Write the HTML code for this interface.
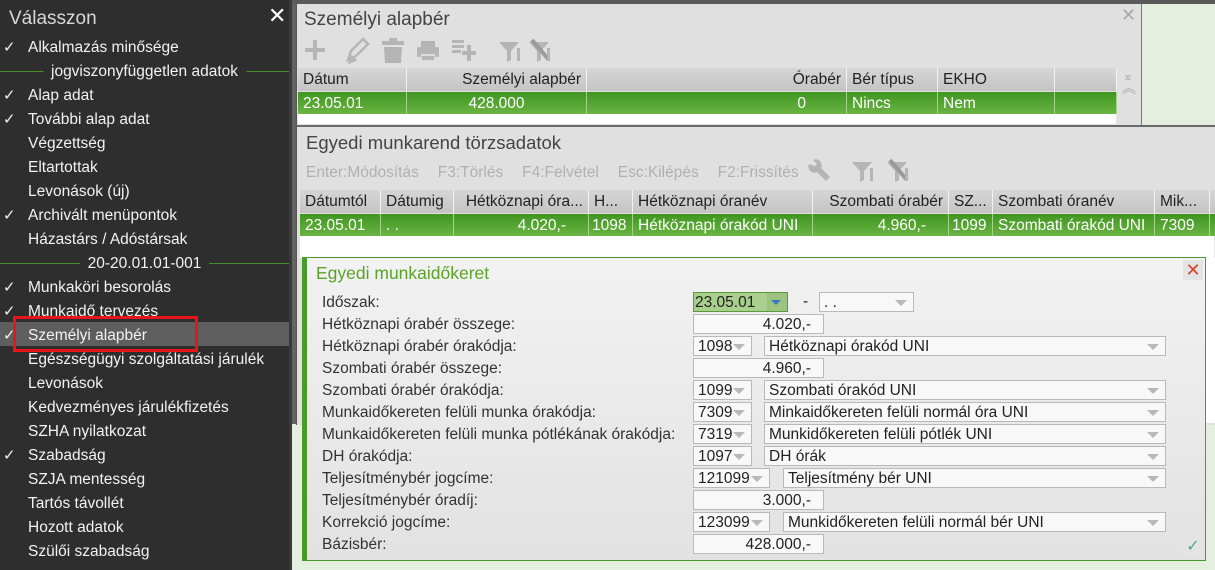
<!DOCTYPE html>
<html><head><meta charset="utf-8"><style>
*{margin:0;padding:0;box-sizing:border-box}
body{width:1215px;height:570px;overflow:hidden;background:#e4efe0;font-family:"Liberation Sans",sans-serif;font-size:15.5px;color:#222;position:relative}
.a{position:absolute;white-space:nowrap}
#side{left:0;top:0;width:289px;height:570px;background:#2e2e2e;color:#f2f2f2}
.it{position:absolute;left:28px;font-size:15.5px;line-height:24px;margin-top:2px}
.ck{position:absolute;left:3px;font-size:15px;line-height:24px;margin-top:2px}
.sep{position:absolute;left:0;width:289px;height:24px;margin-top:2px}
.sep:before{content:"";position:absolute;left:0;right:0;top:11px;border-top:1px solid #4a8f2a}
.sep span{position:absolute;left:50%;transform:translateX(-50%);background:#2e2e2e;padding:0 8px;line-height:24px}
.pan{background:#e0e0e0}
.h{position:absolute;height:23px;line-height:24px;background:linear-gradient(#d6d6d6,#c4c4c4);border-right:1px solid #f2f2f2;padding:0 5px;color:#222;overflow:hidden}
.g{position:absolute;height:22px;line-height:23px;background:linear-gradient(#3f9520,#6ab443);border-right:1px solid #a6d48a;padding:0 5px;color:#fff;overflow:hidden}
.w{position:absolute;background:#fff;border-right:1px solid #e4e4e4}
.r{text-align:right}
.lab{position:absolute;left:322px;font-size:15.5px;color:#333;line-height:22px;margin-top:1px}
.box{position:absolute;height:20px;background:#f8f8f8;border:1px solid #b9b9b9;line-height:19px;padding:0 4px;font-size:15.5px;color:#222;overflow:hidden}
.dd:after{content:"";position:absolute;right:6px;top:7px;border-left:6px solid transparent;border-right:6px solid transparent;border-top:6px solid #b8b8b8}
</style></head><body>
<div class="a" style="left:0;top:0;width:1215px;height:4px;background:#5a5a5a"></div>
<div id="side" class="a">
<div class="a" style="left:9px;top:8px;font-size:19px;color:#d8d8d8">Válasszon</div>
<div class="a" style="left:268px;top:3px;font-size:22px;color:#fff">✕</div>
<div class="ck" style="top:34px">✓</div><div class="it" style="top:34px">Alkalmazás minősége</div>
<div class="sep" style="top:58px"><span>jogviszonyfüggetlen adatok</span></div>
<div class="ck" style="top:82px">✓</div><div class="it" style="top:82px">Alap adat</div>
<div class="ck" style="top:106px">✓</div><div class="it" style="top:106px">További alap adat</div>
<div class="it" style="top:130px">Végzettség</div>
<div class="it" style="top:154px">Eltartottak</div>
<div class="it" style="top:178px">Levonások (új)</div>
<div class="ck" style="top:202px">✓</div><div class="it" style="top:202px">Archivált menüpontok</div>
<div class="it" style="top:226px">Házastárs / Adóstársak</div>
<div class="sep" style="top:250px"><span>20-20.01.01-001</span></div>
<div class="ck" style="top:274px">✓</div><div class="it" style="top:274px">Munkaköri besorolás</div>
<div class="ck" style="top:298px">✓</div><div class="it" style="top:298px">Munkaidő tervezés</div>
<div class="a" style="left:0;top:322px;width:289px;height:24px;background:#5e5e5e"></div>
<div class="ck" style="top:322px">✓</div><div class="it" style="top:322px">Személyi alapbér</div>
<div class="a" style="left:13px;top:316px;width:185px;height:36px;border:3px solid #e8141a"></div>
<div class="it" style="top:346px">Egészségügyi szolgáltatási járulék</div>
<div class="it" style="top:370px">Levonások</div>
<div class="it" style="top:394px">Kedvezményes járulékfizetés</div>
<div class="it" style="top:418px">SZHA nyilatkozat</div>
<div class="ck" style="top:442px">✓</div><div class="it" style="top:442px">Szabadság</div>
<div class="it" style="top:466px">SZJA mentesség</div>
<div class="it" style="top:490px">Tartós távollét</div>
<div class="it" style="top:514px">Hozott adatok</div>
<div class="it" style="top:538px">Szülői szabadság</div>
</div>
<div class="a" style="left:289px;top:0;width:3px;height:570px;background:#3a3a3a"></div>
<div class="a" style="left:292px;top:4px;width:5px;height:420px;background:#636363"></div>

<!-- top panel -->
<div class="a pan" style="left:296px;top:4px;width:846px;height:121px;border-left:1px solid #555;border-right:1px solid #777"></div>
<div class="a" style="left:304px;top:9px;font-size:19px;color:#444">Személyi alapbér</div>
<div class="a" style="left:1121px;top:5px;font-size:18px;color:#aaa">✕</div>
<svg class="a" style="left:300px;top:36px" width="260" height="30" viewBox="0 0 260 30" fill="#b5b5b5">
<rect x="5" y="12" width="20" height="4"/><rect x="13" y="4" width="4" height="20"/>
<path d="M48 24 l3-9 12-12 5 5-12 12z M50 26l2-5 3 3z" fill="none" stroke="#b5b5b5" stroke-width="2.5"/>
<rect x="82" y="5" width="22" height="4"/><rect x="89" y="2" width="8" height="4"/><path d="M84 11h18l-1 16h-16z"/>
<rect x="121" y="5" width="14" height="6"/><rect x="117" y="11" width="22" height="10" rx="2"/><rect x="121" y="18" width="14" height="7" fill="#ddd"/><rect x="122" y="20" width="12" height="4"/>
<rect x="152" y="4" width="12" height="3"/><rect x="152" y="9" width="12" height="3"/><rect x="152" y="14" width="9" height="3"/><rect x="162" y="15" width="14" height="4"/><rect x="167" y="9" width="4" height="16"/>
<path d="M199 6h20l-8 9v9l-4 2v-11z"/><rect x="217" y="12" width="3" height="13"/>
<path d="M229 6h20l-8 9v9l-4 2v-11z"/><path d="M232 4l17 20" stroke="#9a9a9a" stroke-width="4"/><rect x="247" y="12" width="3" height="13"/>
</svg>
<div class="h" style="left:298px;top:68px;width:109px">Dátum</div>
<div class="h r" style="left:407px;top:68px;width:180px">Személyi alapbér</div>
<div class="h r" style="left:587px;top:68px;width:260px">Órabér</div>
<div class="h" style="left:847px;top:68px;width:91px">Bér típus</div>
<div class="h" style="left:938px;top:68px;width:117px">EKHO</div>
<div class="h" style="left:1055px;top:68px;width:62px"></div>
<div class="g" style="left:298px;top:92px;width:109px">23.05.01</div>
<div class="g" style="left:407px;top:92px;width:180px;text-align:center">428.000</div>
<div class="g r" style="left:587px;top:92px;width:260px;padding-right:40px">0</div>
<div class="g" style="left:847px;top:92px;width:91px">Nincs</div>
<div class="g" style="left:938px;top:92px;width:117px">Nem</div>
<div class="g" style="left:1055px;top:92px;width:62px"></div>
<div class="w" style="left:298px;top:114px;width:819px;height:10px"></div>
<div class="a" style="left:1122px;top:70px;font-size:14px;color:#aaa;line-height:12px">⌅<br>︽</div>

<!-- second panel -->
<div class="a pan" style="left:296px;top:125px;width:919px;height:300px;border-top:2px solid #6a6a6a;border-left:1px solid #555"></div>
<div class="a" style="left:306px;top:132px;font-size:18.5px;color:#444">Egyedi munkarend törzsadatok</div>
<div class="a" style="left:306px;top:164px;font-size:15.5px;color:#b0b0b0;word-spacing:2px">Enter:Módosítás &nbsp; F3:Törlés &nbsp; F4:Felvétel &nbsp; Esc:Kilépés &nbsp; F2:Frissítés</div>
<svg class="a" style="left:805px;top:158px" width="110" height="28" viewBox="0 0 110 28" fill="#b5b5b5">
<path d="M4 6a6 6 0 0 0 8 8l9 9 4-4-9-9a6 6 0 0 0-8-8l4 4-2 2z"/>
<path d="M47 4h20l-8 9v9l-4 2v-11z"/><rect x="65" y="10" width="3" height="13"/>
<path d="M82 4h20l-8 9v9l-4 2v-11z"/><path d="M85 2l17 20" stroke="#9a9a9a" stroke-width="4"/><rect x="100" y="10" width="3" height="13"/>
</svg>
<div class="h" style="left:300px;top:190px;width:81px">Dátumtól</div>
<div class="h" style="left:381px;top:190px;width:73px">Dátumig</div>
<div class="h r" style="left:454px;top:190px;width:135px">Hétköznapi óra...</div>
<div class="h" style="left:589px;top:190px;width:44px">H...</div>
<div class="h" style="left:633px;top:190px;width:180px">Hétköznapi óranév</div>
<div class="h r" style="left:813px;top:190px;width:136px">Szombati órabér</div>
<div class="h" style="left:949px;top:190px;width:44px">SZ...</div>
<div class="h" style="left:993px;top:190px;width:162px">Szombati óranév</div>
<div class="h" style="left:1155px;top:190px;width:55px">Mik...</div>
<div class="h" style="left:1210px;top:190px;width:5px"></div>
<div class="g" style="left:300px;top:214px;width:81px">23.05.01</div>
<div class="g" style="left:381px;top:214px;width:73px">. .</div>
<div class="g r" style="left:454px;top:214px;width:135px;padding-right:22px">4.020,-</div>
<div class="g" style="left:589px;top:214px;width:44px;padding:0 3px">1098</div>
<div class="g" style="left:633px;top:214px;width:180px">Hétköznapi órakód UNI</div>
<div class="g r" style="left:813px;top:214px;width:136px;padding-right:22px">4.960,-</div>
<div class="g" style="left:949px;top:214px;width:44px;padding:0 3px">1099</div>
<div class="g" style="left:993px;top:214px;width:162px">Szombati órakód UNI</div>
<div class="g" style="left:1155px;top:214px;width:55px">7309</div>
<div class="g" style="left:1210px;top:214px;width:5px"></div>
<div class="w" style="left:300px;top:236px;width:915px;height:22px"></div>
<div class="a" style="left:1205px;top:258px;width:10px;height:165px;background:#fff"></div>

<!-- dialog -->
<div class="a" style="left:302px;top:257px;width:904px;height:304px;border:1px solid #4a9a2a;border-left:5px solid #4a9a2a;background:linear-gradient(#f2f2f2,#e2e2e2)"></div>
<div class="a" style="left:316px;top:263px;font-size:17.5px;color:#5aa326">Egyedi munkaidőkeret</div>
<div class="a" style="left:1183px;top:260px;width:20px;height:20px;background:#e4e4e4;color:#d9432e;font-size:18px;line-height:20px;text-align:center">✕</div>
<div class="a" style="left:1183px;top:537px;width:20px;height:20px;background:#e4e4e4;color:#4bb07a;font-size:16px;line-height:20px;text-align:center">✓</div>

<div class="lab" style="top:291px">Időszak:</div>
<div class="lab" style="top:313px">Hétköznapi órabér összege:</div>
<div class="lab" style="top:335px">Hétköznapi órabér órakódja:</div>
<div class="lab" style="top:357px">Szombati órabér összege:</div>
<div class="lab" style="top:379px">Szombati órabér órakódja:</div>
<div class="lab" style="top:401px">Munkaidőkereten felüli munka órakódja:</div>
<div class="lab" style="top:423px">Munkaidőkereten felüli munka pótlékának órakódja:</div>
<div class="lab" style="top:445px">DH órakódja:</div>
<div class="lab" style="top:467px">Teljesítménybér jogcíme:</div>
<div class="lab" style="top:489px">Teljesítménybér óradíj:</div>
<div class="lab" style="top:511px">Korrekció jogcíme:</div>
<div class="lab" style="top:533px">Bázisbér:</div>

<div class="box" style="left:693px;top:292px;width:95px;background:#a9cf8e;border-color:#5a9a3a;padding-left:1px">23.05.01<span class="a" style="right:0;top:0;width:20px;height:18px;background:#9cc37f"></span><span class="a" style="right:6px;top:7px;border-left:5px solid transparent;border-right:5px solid transparent;border-top:5px solid #3a78c8"></span></div>
<div class="a" style="left:803px;top:293px">-</div>
<div class="box dd" style="left:819px;top:292px;width:95px">. .</div>
<div class="box r" style="left:693px;top:314px;width:131px;padding-right:12px">4.020,-</div>
<div class="box dd" style="left:693px;top:336px;width:59px">1098</div>
<div class="box dd" style="left:764px;top:336px;width:402px">Hétköznapi órakód UNI</div>
<div class="box r" style="left:693px;top:358px;width:131px;padding-right:12px">4.960,-</div>
<div class="box dd" style="left:693px;top:380px;width:59px">1099</div>
<div class="box dd" style="left:764px;top:380px;width:402px">Szombati órakód UNI</div>
<div class="box dd" style="left:693px;top:402px;width:59px">7309</div>
<div class="box dd" style="left:764px;top:402px;width:402px">Minkaidőkereten felüli normál óra UNI</div>
<div class="box dd" style="left:693px;top:424px;width:59px">7319</div>
<div class="box dd" style="left:764px;top:424px;width:402px">Munkidőkereten felüli pótlék UNI</div>
<div class="box dd" style="left:693px;top:446px;width:59px">1097</div>
<div class="box dd" style="left:764px;top:446px;width:402px">DH órák</div>
<div class="box dd" style="left:693px;top:468px;width:77px">121099</div>
<div class="box dd" style="left:783px;top:468px;width:383px">Teljesítmény bér UNI</div>
<div class="box r" style="left:693px;top:490px;width:131px;padding-right:12px">3.000,-</div>
<div class="box dd" style="left:693px;top:512px;width:77px">123099</div>
<div class="box dd" style="left:783px;top:512px;width:383px">Munkidőkereten felüli normál bér UNI</div>
<div class="box r" style="left:693px;top:534px;width:131px;padding-right:12px">428.000,-</div>
</body></html>
